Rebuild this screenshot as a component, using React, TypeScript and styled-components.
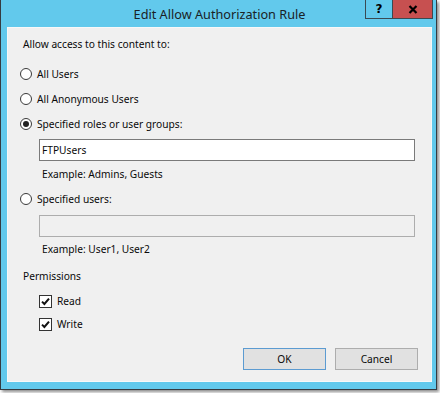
import React, { useState } from "react";
import styled, { createGlobalStyle } from "styled-components";

const GlobalStyle = createGlobalStyle`
  html, body {
    margin: 0;
    padding: 0;
    background: #ffffff;
  }
  #root {
    width: 440px;
    height: 393px;
    overflow: hidden;
  }
  * {
    box-sizing: border-box;
  }
`;

const uiFont = `"Noto Sans", "Open Sans", sans-serif`;
const bodySize = "10.2px";

const Window = styled.div`
  width: 437px;
  height: 390px;
  display: flex;
  flex-direction: column;
  background: #62c9ec;
  border: 1px solid #353b41;
  border-top: none;
  padding: 0 4px 7px 6px;
  box-shadow: 2px 2px 3px rgba(0, 0, 0, 0.45);
  font-family: ${uiFont};
  color: #0a0a0a;
`;

const TitleBar = styled.div`
  height: 27px;
  display: grid;
  grid-template-columns: 1fr auto 1fr;
`;

const Title = styled.div`
  grid-column: 2;
  font-size: 12.7px;
  line-height: 28px;
  color: #1a2225;
  white-space: nowrap;
`;

const CaptionButtons = styled.div`
  grid-column: 3;
  justify-self: end;
  align-self: start;
  display: flex;
  margin-right: -1px;
`;

const CaptionButton = styled.div<{ $close?: boolean }>`
  width: ${(p) => (p.$close ? "41px" : "28px")};
  height: 19px;
  display: flex;
  align-items: center;
  justify-content: center;
  background: ${(p) => (p.$close ? "#c75050" : "#62c9ec")};
  border: 1px solid #3a4a52;
  border-top: none;
  margin-left: ${(p) => (p.$close ? "-1px" : "0")};
  font-family: "DejaVu Sans", sans-serif;
  font-weight: bold;
  font-size: 12px;
  color: #000;
`;

const Client = styled.div`
  flex: 1;
  display: flex;
  flex-direction: column;
  background: #f0f0f0;
  border: 1px solid #f8f8f8;
  padding: 8px 13px 11px 12px;
`;

const Label = styled.div<{ $top?: number; $indent?: number }>`
  font-size: ${bodySize};
  line-height: 16px;
  height: 16px;
  margin-top: ${(p) => p.$top ?? 0}px;
  margin-left: ${(p) => p.$indent ?? 0}px;
  white-space: nowrap;
`;

const OptionRow = styled.label<{ $top?: number; $indent?: number }>`
  display: flex;
  align-items: center;
  gap: 5px;
  height: 16px;
  margin-top: ${(p) => p.$top ?? 0}px;
  margin-left: ${(p) => p.$indent ?? 0}px;
  font-size: ${bodySize};
  line-height: 16px;
  cursor: default;
`;

const RadioCircle = styled.span<{ $checked: boolean }>`
  width: 12px;
  height: 12px;
  border-radius: 50%;
  border: 1px solid #3a3a3a;
  background: #fff;
  display: flex;
  align-items: center;
  justify-content: center;

  &::after {
    content: "";
    width: 6px;
    height: 6px;
    border-radius: 50%;
    background: ${(p) => (p.$checked ? "#222" : "transparent")};
  }
`;

const CheckBox = styled.span`
  width: 13px;
  height: 13px;
  border: 1px solid #333;
  background: #fff;
  display: flex;
  align-items: center;
  justify-content: center;
`;

const TextBox = styled.input<{ $top?: number }>`
  width: 376px;
  height: 22px;
  margin-top: ${(p) => p.$top ?? 0}px;
  margin-left: 19px;
  border: 1px solid #7a7a7a;
  background: #fff;
  padding: 0 2px;
  font-family: ${uiFont};
  font-size: ${bodySize};
  color: #0a0a0a;
  outline: none;

  &:disabled {
    border-color: #adadad;
    background: #f0f0f0;
  }
`;

const ButtonRow = styled.div`
  margin-top: auto;
  display: flex;
  justify-content: flex-end;
  gap: 9px;
`;

const DialogButton = styled.button<{ $default?: boolean }>`
  width: 83px;
  height: 22px;
  background: #e1e1e1;
  border: 1px solid ${(p) => (p.$default ? "#5c9bd1" : "#adadad")};
  font-family: ${uiFont};
  font-size: ${bodySize};
  color: #0a0a0a;
  padding: 0;
`;

const Check = () => (
  <svg width="9" height="9" viewBox="0 0 9 9">
    <path d="M1 4.6 L3.4 7 L8 1.6" fill="none" stroke="#111" strokeWidth="2" />
  </svg>
);

const CloseGlyph = () => (
  <svg width="10" height="9" viewBox="0 0 10 9">
    <path d="M1.5 1 L8.5 8 M8.5 1 L1.5 8" stroke="#000" strokeWidth="2.2" />
  </svg>
);

type Choice = "all" | "anon" | "roles" | "users";

const App: React.FC = () => {
  const [choice, setChoice] = useState<Choice>("roles");
  const [read, setRead] = useState(true);
  const [write, setWrite] = useState(true);

  return (
    <>
      <GlobalStyle />
      <Window>
        <TitleBar>
          <Title>Edit Allow Authorization Rule</Title>
          <CaptionButtons>
            <CaptionButton>?</CaptionButton>
            <CaptionButton $close>
              <CloseGlyph />
            </CaptionButton>
          </CaptionButtons>
        </TitleBar>
        <Client>
          <Label $indent={3}>Allow access to this content to:</Label>

          <OptionRow $top={14} onClick={() => setChoice("all")}>
            <RadioCircle $checked={choice === "all"} />
            All Users
          </OptionRow>
          <OptionRow $top={9} onClick={() => setChoice("anon")}>
            <RadioCircle $checked={choice === "anon"} />
            All Anonymous Users
          </OptionRow>
          <OptionRow $top={9} onClick={() => setChoice("roles")}>
            <RadioCircle $checked={choice === "roles"} />
            Specified roles or user groups:
          </OptionRow>
          <TextBox $top={7} defaultValue="FTPUsers" disabled={choice !== "roles"} />
          <Label $top={5} $indent={22}>
            Example: Admins, Guests
          </Label>

          <OptionRow $top={9} onClick={() => setChoice("users")}>
            <RadioCircle $checked={choice === "users"} />
            Specified users:
          </OptionRow>
          <TextBox $top={8} disabled={choice !== "users"} />
          <Label $top={4} $indent={22}>
            Example: User1, User2
          </Label>

          <Label $top={11} $indent={3}>
            Permissions
          </Label>
          <OptionRow $top={9} $indent={19} onClick={() => setRead(!read)}>
            <CheckBox>{read && <Check />}</CheckBox>
            Read
          </OptionRow>
          <OptionRow $top={7} $indent={19} onClick={() => setWrite(!write)}>
            <CheckBox>{write && <Check />}</CheckBox>
            Write
          </OptionRow>

          <ButtonRow>
            <DialogButton $default>OK</DialogButton>
            <DialogButton>Cancel</DialogButton>
          </ButtonRow>
        </Client>
      </Window>
    </>
  );
};

export default App;
